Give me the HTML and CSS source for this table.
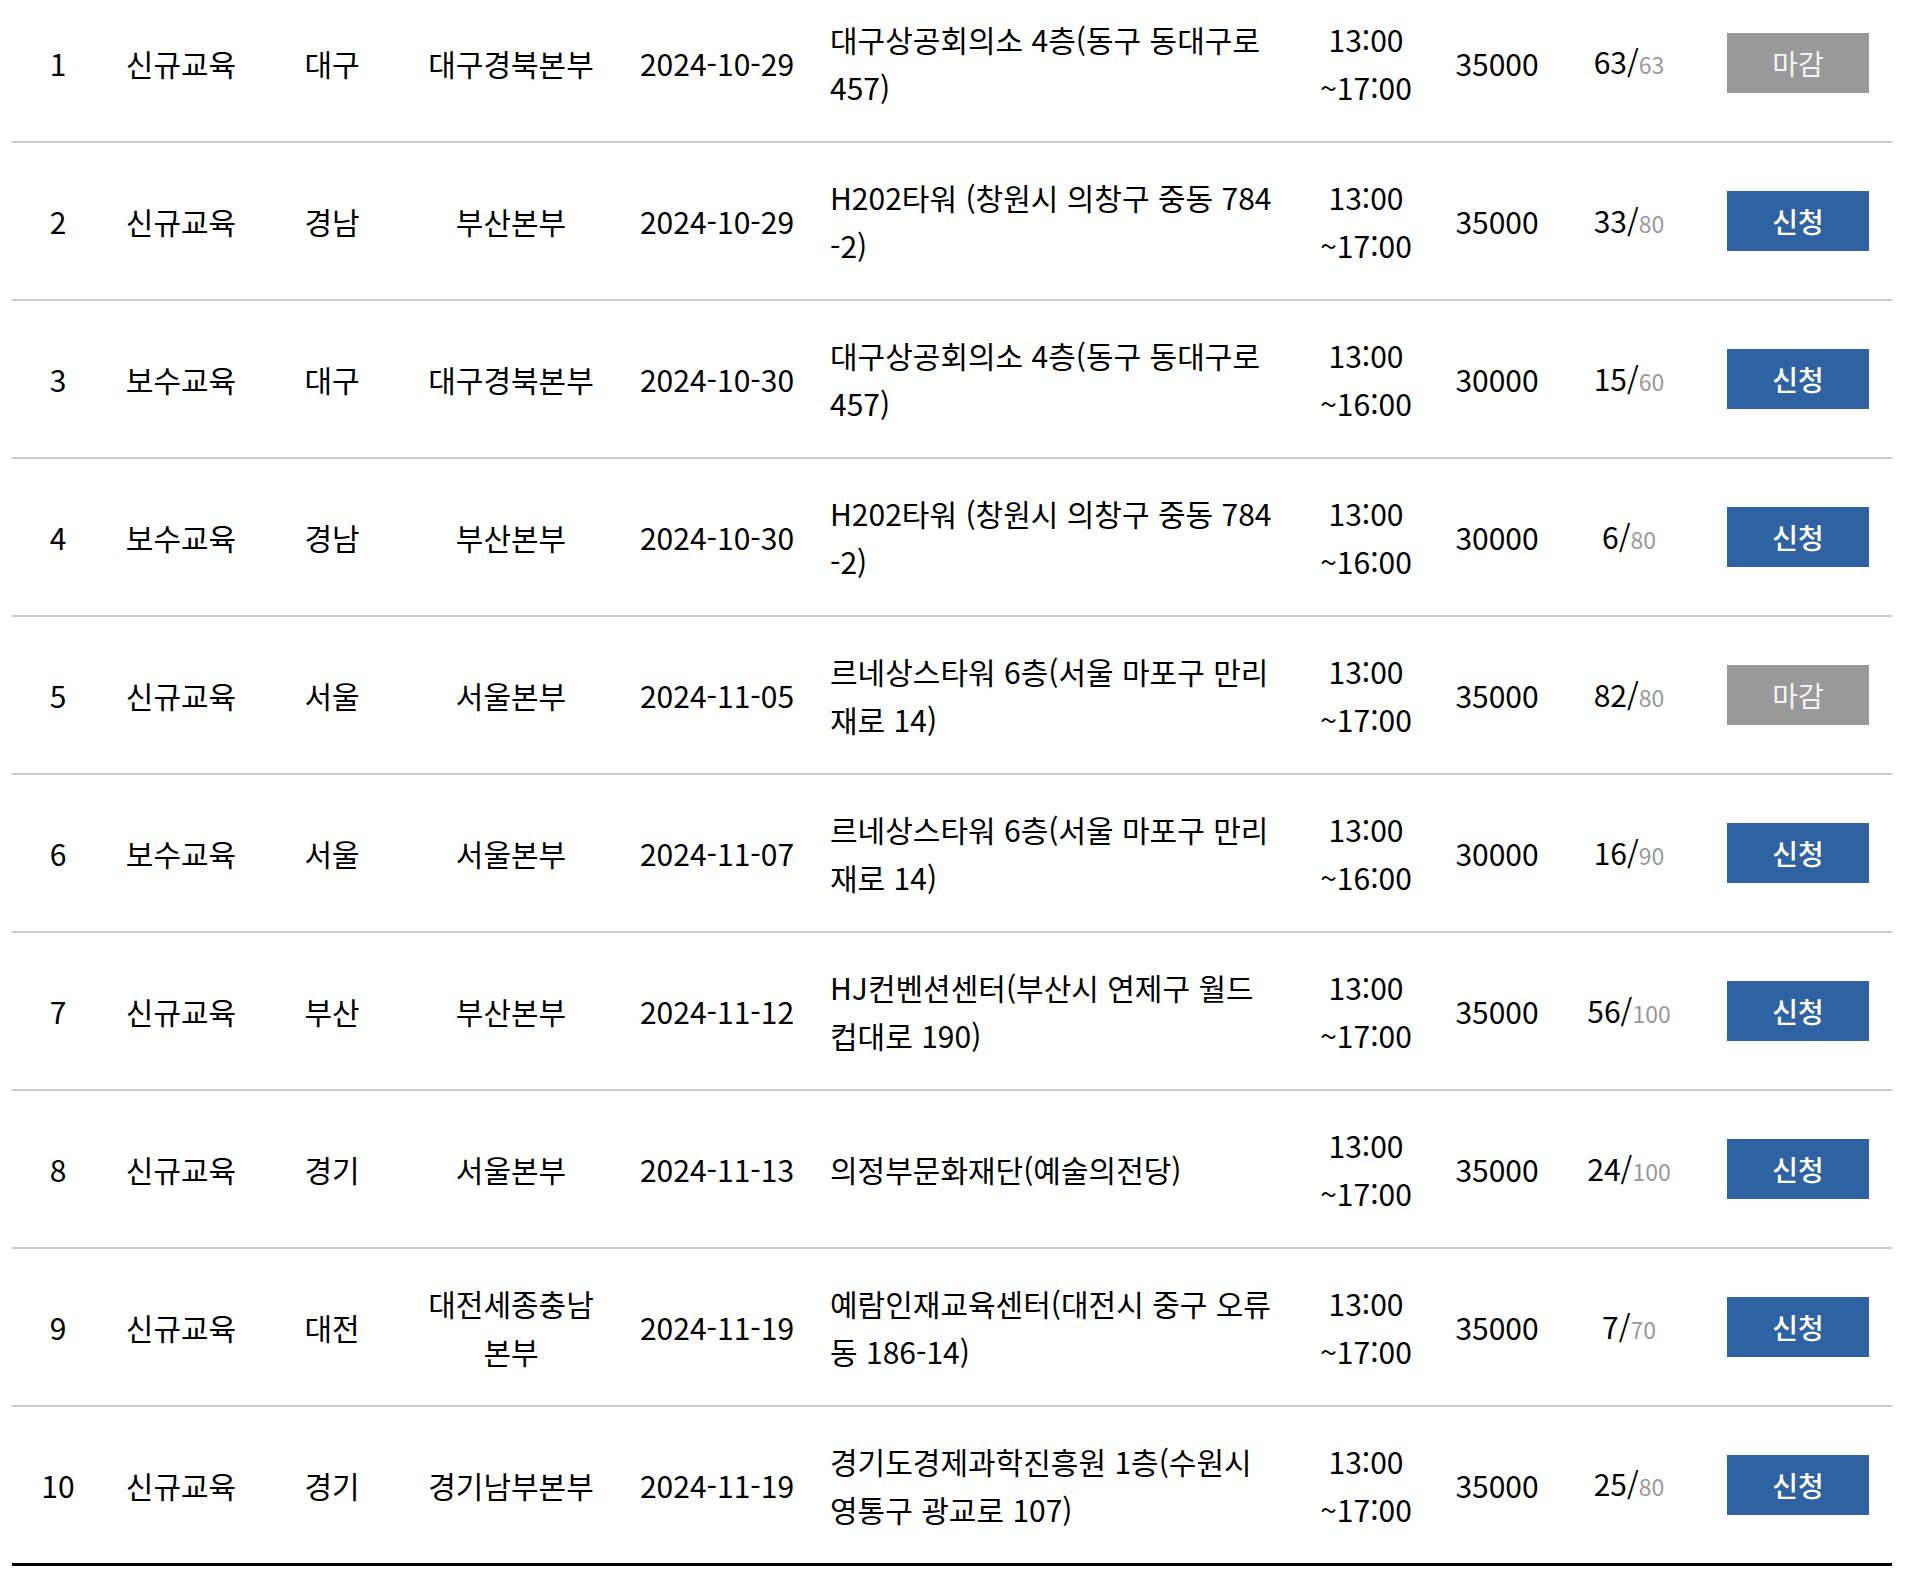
FILE: index.html
```html
<!DOCTYPE html>
<html lang="ko">
<head>
<meta charset="utf-8">
<title>교육 일정</title>
<link rel="stylesheet" href="styles.css">
</head>
<body>
<div class="wrap">
<table class="schedule">
  <colgroup>
    <col class="c-no"><col class="c-type"><col class="c-area"><col class="c-branch"><col class="c-date">
    <col class="c-place"><col class="c-time"><col class="c-fee"><col class="c-count"><col class="c-btn">
  </colgroup>
  <tbody>
    <tr><td>1</td><td>신규교육</td><td>대구</td><td class="branch">대구경북본부</td><td>2024-10-29</td><td class="place">대구상공회의소 4층(동구 동대구로 457)</td><td class="time">13:00<br>~17:00</td><td>35000</td><td class="count">63/<span class="max">63</span></td><td class="action"><span class="btn closed">마감</span></td></tr>
    <tr><td>2</td><td>신규교육</td><td>경남</td><td class="branch">부산본부</td><td>2024-10-29</td><td class="place">H202타워 (창원시 의창구 중동 784-2)</td><td class="time">13:00<br>~17:00</td><td>35000</td><td class="count">33/<span class="max">80</span></td><td class="action"><span class="btn apply">신청</span></td></tr>
    <tr><td>3</td><td>보수교육</td><td>대구</td><td class="branch">대구경북본부</td><td>2024-10-30</td><td class="place">대구상공회의소 4층(동구 동대구로 457)</td><td class="time">13:00<br>~16:00</td><td>30000</td><td class="count">15/<span class="max">60</span></td><td class="action"><span class="btn apply">신청</span></td></tr>
    <tr><td>4</td><td>보수교육</td><td>경남</td><td class="branch">부산본부</td><td>2024-10-30</td><td class="place">H202타워 (창원시 의창구 중동 784-2)</td><td class="time">13:00<br>~16:00</td><td>30000</td><td class="count">6/<span class="max">80</span></td><td class="action"><span class="btn apply">신청</span></td></tr>
    <tr><td>5</td><td>신규교육</td><td>서울</td><td class="branch">서울본부</td><td>2024-11-05</td><td class="place">르네상스타워 6층(서울 마포구 만리재로 14)</td><td class="time">13:00<br>~17:00</td><td>35000</td><td class="count">82/<span class="max">80</span></td><td class="action"><span class="btn closed">마감</span></td></tr>
    <tr><td>6</td><td>보수교육</td><td>서울</td><td class="branch">서울본부</td><td>2024-11-07</td><td class="place">르네상스타워 6층(서울 마포구 만리재로 14)</td><td class="time">13:00<br>~16:00</td><td>30000</td><td class="count">16/<span class="max">90</span></td><td class="action"><span class="btn apply">신청</span></td></tr>
    <tr><td>7</td><td>신규교육</td><td>부산</td><td class="branch">부산본부</td><td>2024-11-12</td><td class="place">HJ컨벤션센터(부산시 연제구 월드컵대로 190)</td><td class="time">13:00<br>~17:00</td><td>35000</td><td class="count">56/<span class="max">100</span></td><td class="action"><span class="btn apply">신청</span></td></tr>
    <tr><td>8</td><td>신규교육</td><td>경기</td><td class="branch">서울본부</td><td>2024-11-13</td><td class="place">의정부문화재단(예술의전당)</td><td class="time">13:00<br>~17:00</td><td>35000</td><td class="count">24/<span class="max">100</span></td><td class="action"><span class="btn apply">신청</span></td></tr>
    <tr><td>9</td><td>신규교육</td><td>대전</td><td class="branch">대전세종충남본부</td><td>2024-11-19</td><td class="place">예람인재교육센터(대전시 중구 오류동 186-14)</td><td class="time">13:00<br>~17:00</td><td>35000</td><td class="count">7/<span class="max">70</span></td><td class="action"><span class="btn apply">신청</span></td></tr>
    <tr><td>10</td><td>신규교육</td><td>경기</td><td class="branch">경기남부본부</td><td>2024-11-19</td><td class="place">경기도경제과학진흥원 1층(수원시 영통구 광교로 107)</td><td class="time">13:00<br>~17:00</td><td>35000</td><td class="count">25/<span class="max">80</span></td><td class="action"><span class="btn apply">신청</span></td></tr>
  </tbody>
</table>
</div>
</body>
</html>
```

FILE: styles.css
```css
html, body {
  margin: 0;
  padding: 0;
  background: #fff;
}
body {
  font-family: "Noto Sans CJK KR", "Noto Sans", sans-serif;
  color: #000;
  font-size: 30px;
}
.wrap {
  padding: 0 14px 0 12px;
  margin-top: -16px;
}
.schedule {
  width: 1880px;
  table-layout: fixed;
  border-collapse: collapse;
  border-spacing: 0;
}
.c-no { width: 92px; }
.c-type { width: 154px; }
.c-area { width: 148px; }
.c-branch { width: 210px; }
.c-date { width: 202px; }
.c-place { width: 482px; }
.c-time { width: 132px; }
.c-fee { width: 130px; }
.c-count { width: 134px; }
.c-btn { width: 196px; }

.schedule tr {
  height: 158px;
  border-bottom: 2px solid #ccc;
}
.schedule tr:last-child {
  border-bottom: 3px solid #000;
}
.schedule td {
  padding: 0 8px;
  text-align: center;
  vertical-align: middle;
  line-height: 48px;
}
.schedule td.branch {
  padding: 0 16px;
}
.schedule td.place {
  text-align: left;
  padding: 0 19px 0 12px;
  word-break: break-all;
}
.schedule td.action {
  padding: 0 0 0 8px;
}
.count .max {
  color: #999;
  font-size: 23px;
}
.btn {
  display: inline-block;
  width: 142px;
  height: 60px;
  line-height: 60px;
  color: #fff;
  font-size: 28px;
}
.btn.apply {
  background: #2e62a3;
  font-weight: 500;
}
.btn.closed {
  background: #999;
  color: #f4f4f4;
}
```
